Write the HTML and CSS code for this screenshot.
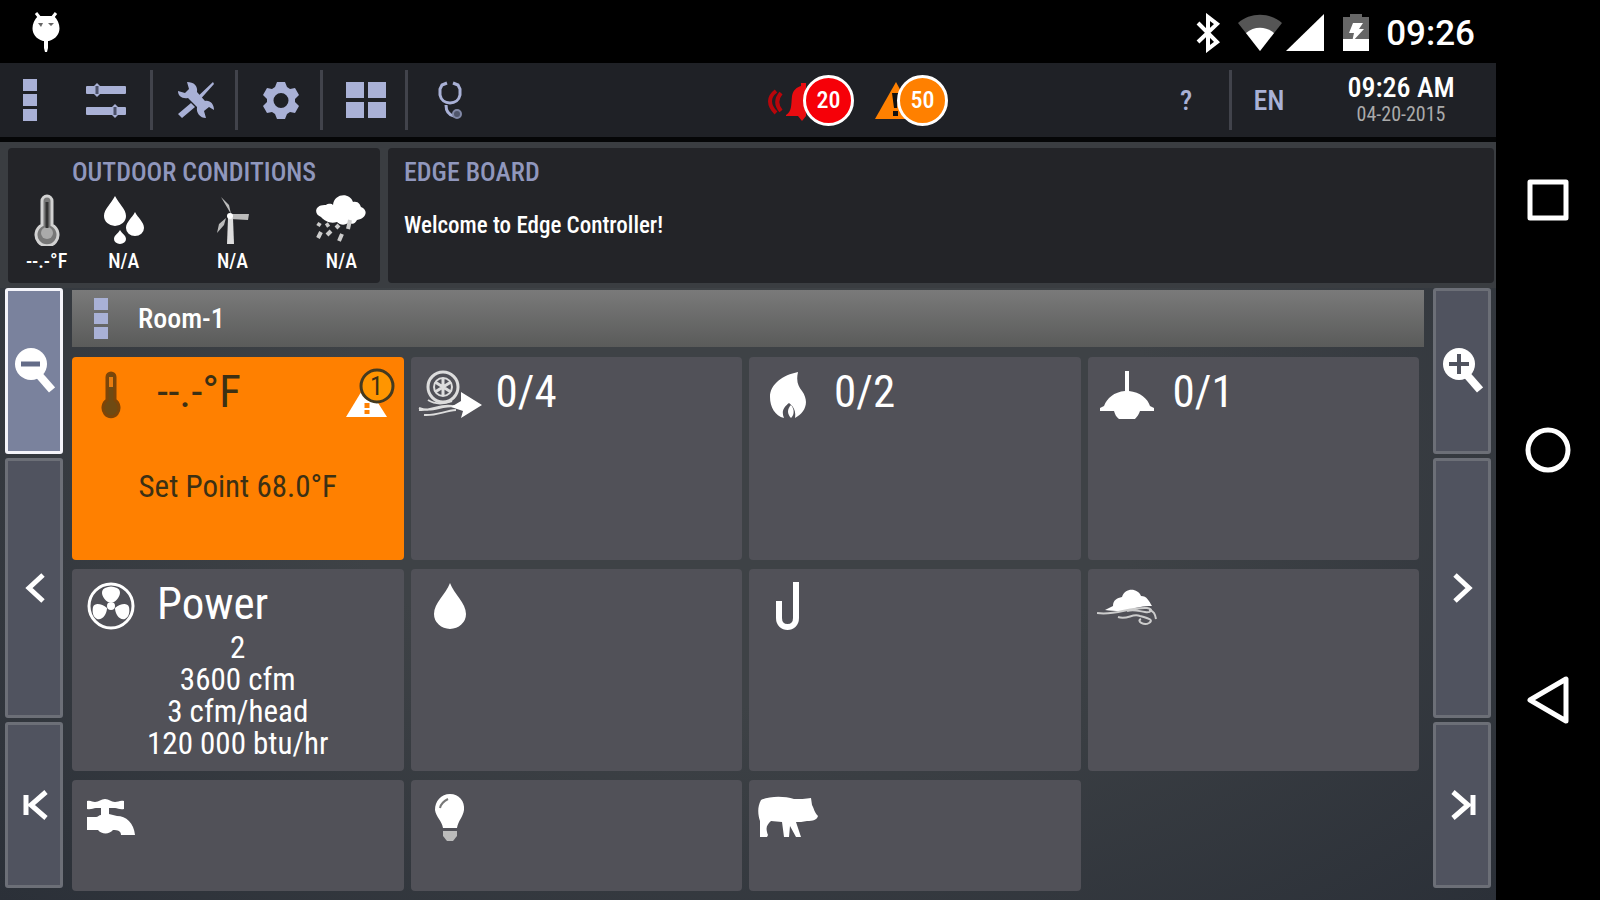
FILE: index.html
```html
<!DOCTYPE html>
<html lang="en">
<head>
    <meta charset="UTF-8">
    <meta name="viewport" content="width=device-width, initial-scale=1.0">
    <title>Edge Controller</title>
    <link rel="stylesheet" href="styles.css">
</head>
<body>

    <div class="device">
        <!-- Android status bar -->
        <div class="status-bar">
            <svg class="droid" width="28" height="42" viewBox="0 0 28 42">
                <path d="M4 1l4 5M24 1l-4 5" stroke="#fff" stroke-width="3"/>
                <path d="M6 4h16c8 8 8 21-5 25h-1v7l-1 4h-2l-1-4v-7h-1C-2 25-2 12 6 4z" fill="#fff"/>
                <path d="M6 11h5l-2 4zM22 11h-6l3 3z" fill="#666"/>
            </svg>
            <div class="status-icons">
                <svg width="26" height="40" viewBox="0 0 26 40">
                    <path d="M3 10l19 19-9 7V4l9 7L3 29" fill="none" stroke="#fff" stroke-width="4"/>
                </svg>
                <svg class="wifi" width="44" height="38" viewBox="0 0 44 38">
                    <path d="M0 9C12-2 32-2 44 9L22 37z" fill="#555"/>
                    <path d="M8 19c8-7 20-7 28 0L22 37z" fill="#fff"/>
                </svg>
                <svg width="38" height="38" viewBox="0 0 38 38"><path d="M38 0v37H0z" fill="#fff"/></svg>
                <svg class="battery" width="26" height="38" viewBox="0 0 26 38">
                    <path d="M7 0h12v3h7v34H0V3h7z" fill="#666"/>
                    <path d="M0 25h26v12H0z" fill="#fff"/>
                    <path d="M10 9h10l-4 6h5L9 28l2-9H6z" fill="#fff"/>
                </svg>
                <span class="status-time">09:26</span>
            </div>
        </div>

        <!-- Toolbar -->
        <div class="toolbar">
            <div class="tools">
                <button class="tool menu" aria-label="Menu">
                    <svg width="14" height="44" viewBox="0 0 14 44"><path d="M0 1h14v12H0zM0 16h14v12H0zM0 31h14v12H0z"/></svg>
                </button>
                <button class="tool first" aria-label="Parameters">
                    <svg width="40" height="36" viewBox="0 0 40 36">
                        <path d="M1 5h38v6H1zM1 26h38v6H1z" stroke="#a9b1d6" stroke-width="2" stroke-linejoin="round"/>
                        <path d="M11 1l4 4v6l-4 4-4-4V5zM29 22l4 4v6l-4 4-4-4v-6z"/>
                        <path d="M11 4v8M29 25v8" stroke="#4b5068" stroke-width="3"/>
                    </svg>
                </button>
                <button class="tool" aria-label="Tools">
                    <svg width="38" height="38" viewBox="0 0 38 38">
                        <path d="M1 10l7 2 4-4-2-7c7 0 11 4 10 10l8 9c5-1 9 3 9 9l-5-3-5 4 2 7c-6 0-10-5-9-11l-9-9C5 18 1 15 1 10z"/>
                        <path d="M36 1l1 2-17 19-3-3zM14 22l4 4L5 37l-4-4z"/>
                    </svg>
                </button>
                <button class="tool" aria-label="Settings">
                    <svg width="36" height="38" viewBox="0 0 36 38">
                        <path fill-rule="evenodd" d="M14 1h8l2 5 3 2 5-1 4 7-4 4v3l4 4-4 7-5-1-3 2-2 5h-8l-2-5-3-2-5 1-4-7 4-4v-3l-4-4 4-7 5 1 3-2zM18 12a7 7 0 1 0 0 15a7 7 0 1 0 0-15z"/>
                    </svg>
                </button>
                <button class="tool" aria-label="Overview">
                    <svg width="40" height="38" viewBox="0 0 40 38"><path d="M0 1h18v16H0zM22 1h18v16H22zM0 21h18v16H0zM22 21h18v16H22z"/></svg>
                </button>
                <button class="tool last" aria-label="Diagnostics">
                    <svg width="26" height="38" viewBox="0 0 26 38">
                        <path d="M9 2L4 4 2 8v6c1 5 5 8 10 8s9-3 10-8V8l-2-4-5-2M8 24c0 6 3 10 8 11" fill="none" stroke="#a9b1d6" stroke-width="3"/>
                        <circle cx="19" cy="33" r="4" fill="#50566b" stroke="#8188a6" stroke-width="2"/>
                    </svg>
                </button>
            </div>

            <div class="alerts">
                <button class="alert" aria-label="Alarms">
                    <svg width="86" height="54" viewBox="0 0 86 54">
                        <path d="M8 18c-8 6-8 14 0 22M13 20c-5 6-5 12 0 18" fill="none" stroke="#b8060b" stroke-width="4"/>
                        <path d="M18 42c6-4 5-9 6-19 1-6 5-9 9-10v-3h5v33l-4 5-4-5H18z" fill="#e80c10"/>
                    </svg>
                    <span class="badge red">20</span>
                </button>
                <button class="alert" aria-label="Warnings">
                    <svg width="74" height="54" viewBox="0 0 74 54">
                        <path d="M22 9l20 37H1z" fill="#ff8000"/>
                        <path d="M18 20h7l-2 15h-3zM19 38h5v5h-5z" fill="#111"/>
                    </svg>
                    <span class="badge orange">50</span>
                </button>
            </div>

            <div class="tools-right">
                <button class="tool help">?</button>
                <button class="tool lang">EN</button>
                <div class="clock">
                    <div class="clock-time">09:26 AM</div>
                    <div class="clock-date">04-20-2015</div>
                </div>
            </div>
        </div>

        <!-- Weather and message board -->
        <div class="boards">
            <div class="panel outdoor">
                <h2>OUTDOOR CONDITIONS</h2>
                <div class="conditions">
                    <div class="condition">
                        <svg width="26" height="52" viewBox="0 0 26 52">
                            <path d="M8 31V7a5 5 0 0 1 10 0v24a11 11 0 1 1-10 0z" fill="#777" stroke="#d2d2d2" stroke-width="3"/>
                            <circle cx="13" cy="39" r="6" fill="#aaa"/>
                            <path d="M13 8v26" stroke="#333" stroke-width="3"/>
                        </svg>
                        <span>--.-°F</span>
                    </div>
                    <div class="condition">
                        <svg width="42" height="52" viewBox="0 0 42 52">
                            <path d="M12 2c4 8 11 13 11 20a11 10 0 0 1-22 0C1 15 8 10 12 2zM32 18c3 6 9 10 9 16a9 8 0 0 1-18 0c0-6 6-10 9-16zM17 36c2 4 6 5 6 9a6 5 0 0 1-12 0c0-4 4-5 6-9z" fill="#fff"/>
                        </svg>
                        <span>N/A</span>
                    </div>
                    <div class="condition wide">
                        <svg width="36" height="52" viewBox="0 0 36 52">
                            <path d="M6 3l8 8 2 9zM15 20l19 0-1 6-18-1zM11 24l-2 7-7 8 2-9z" fill="#bbb"/>
                            <path d="M13 24h5l1 26h-7z" fill="#ddd"/>
                            <circle cx="15" cy="22" r="3" fill="#fff"/>
                        </svg>
                        <span>N/A</span>
                    </div>
                    <div class="condition">
                        <svg width="52" height="52" viewBox="0 0 52 52">
                            <path d="M6 23c-8-3-6-13 5-12 3-2 6-1 7 0 1-12 17-13 20-3 6-1 7 3 8 5 8 3 5 12-4 13-2 4-5 5-8 2-4 4-9 3-12 0-7 2-12-1-16-5z" fill="#fff"/>
                            <path d="M5 29l-2 3M14 30l-3 2M24 31l-3 3M35 26l-2 9M6 38l-3 6M16 37l-4 4M27 40l-3 7" stroke="#ccc" stroke-width="4"/>
                        </svg>
                        <span>N/A</span>
                    </div>
                </div>
            </div>
            <div class="panel board">
                <h2>EDGE BOARD</h2>
                <p>Welcome to Edge Controller!</p>
            </div>
        </div>

        <!-- Room view -->
        <div class="main">
            <div class="side">
                <button class="side-btn active" aria-label="Zoom out">
                    <svg width="40" height="48" viewBox="0 0 40 48">
                        <circle cx="16" cy="17" r="16" fill="#fff"/>
                        <path d="M24 28l13 15" stroke="#fff" stroke-width="8"/>
                        <path d="M6 17h19" stroke="#646c88" stroke-width="5"/>
                    </svg>
                </button>
                <button class="side-btn tall" aria-label="Previous">
                    <svg width="24" height="32" viewBox="0 0 24 32"><path d="M20 3L6 16l14 13"/></svg>
                </button>
                <button class="side-btn" aria-label="First">
                    <svg width="28" height="32" viewBox="0 0 28 32"><path d="M5 6v20M25 3L10 16l15 13"/></svg>
                </button>
            </div>

            <div class="room">
                <div class="room-bar">
                    <svg width="14" height="42" viewBox="0 0 14 42"><path d="M0 0h14v12H0zM0 15h14v11H0zM0 29h14v12H0z" fill="#a9b1d6"/></svg>
                    <h1>Room-1</h1>
                </div>

                <div class="tiles">
                    <button class="tile warning">
                        <span class="tile-head">
                            <span class="tile-icon">
                                <svg width="20" height="50" viewBox="0 0 20 50">
                                    <path d="M6 30V7a4 4 0 0 1 8 0v23a8 9 0 1 1-8 0z" fill="#6f4a12" stroke="#7d4508" stroke-width="3"/>
                                    <path d="M10 7v10" stroke="#e87d10" stroke-width="4"/>
                                </svg>
                            </span>
                            <span class="tile-value">--.-°F</span>
                            <span class="tile-alert">
                                <svg width="50" height="54" viewBox="0 0 50 54">
                                    <path d="M20 16L41 49H0z" fill="#fff"/>
                                    <path d="M21 35v5M21 42v4" stroke="#ff8000" stroke-width="5"/>
                                    <circle cx="31" cy="18" r="16" fill="#ff9500" stroke="#443a20" stroke-width="3"/>
                                </svg>
                                <span class="tile-count">1</span>
                            </span>
                        </span>
                        <span class="setpoint">Set Point 68.0°F</span>
                    </button>
                    <button class="tile">
                        <span class="tile-head">
                            <span class="tile-icon">
                                <svg width="64" height="50" viewBox="0 0 64 50">
                                    <g fill="none" stroke="#ddd">
                                        <circle cx="25" cy="17" r="15" stroke-width="3"/>
                                        <circle cx="25" cy="17" r="9" stroke-width="2"/>
                                        <path d="M25 8v18M17 12l16 10M17 22l16-10" stroke-width="3"/>
                                        <path d="M10 30c8 5 16 4 24 1M1 38c12 5 22-3 37-2M6 45c12 1 20-4 32-5M1 40c14 1 20-6 33-4" stroke-width="2"/>
                                    </g>
                                    <path d="M43 22l21 13-21 13 2-7-12-4 10-6z" fill="#fff"/>
                                </svg>
                            </span>
                            <span class="tile-value">0/4</span>
                        </span>
                    </button>
                    <button class="tile">
                        <span class="tile-head">
                            <span class="tile-icon">
                                <svg width="38" height="50" viewBox="0 0 38 50">
                                    <path d="M29 2c-2 9 0 14 4 19 8 11 3 22-7 27 1-7-1-11-6-15-5 4-8 8-5 15C6 46 1 37 1 27 1 14 14 5 29 2z" fill="#fff"/>
                                    <path d="M22 35c4 5 3 10 0 13-4-4-4-9 0-13z" fill="#fff"/>
                                </svg>
                            </span>
                            <span class="tile-value">0/2</span>
                        </span>
                    </button>
                    <button class="tile">
                        <span class="tile-head">
                            <span class="tile-icon">
                                <svg width="54" height="50" viewBox="0 0 54 50">
                                    <path d="M25 1h4v20c11 1 19 8 21 15l4 2v3H40c-1 3-3 6-5 8H19c-3-2-4-5-5-8H0v-3l4-2c3-8 10-14 21-15z" fill="#fff"/>
                                </svg>
                            </span>
                            <span class="tile-value">0/1</span>
                        </span>
                    </button>
                    <button class="tile">
                        <span class="tile-head">
                            <span class="tile-icon">
                                <svg width="48" height="50" viewBox="0 0 48 50">
                                    <circle cx="24" cy="25" r="22" fill="none" stroke="#fff" stroke-width="3"/>
                                    <path d="M21 21C16 18 12 10 18 7q6-3 12 0c6 3 2 11-3 14zM20 27c0 6-5 13-10 11-4-2-5-7-4-12 2-5 9-3 14 1zM28 27c5-4 12-6 14-1 1 5 0 10-4 12-5 2-10-5-10-11z" fill="#fff"/>
                                    <circle cx="24" cy="25" r="4" fill="#fff"/>
                                </svg>
                            </span>
                            <span class="tile-value">Power</span>
                        </span>
                        <span class="tile-lines">2<br>3600 cfm<br>3 cfm/head<br>120 000 btu/hr</span>
                    </button>
                    <button class="tile" aria-label="Water">
                        <span class="tile-head">
                            <span class="tile-icon">
                                <svg width="34" height="50" viewBox="0 0 34 50"><path d="M17 2c4 11 16 20 16 31a16 15 0 0 1-32 0C1 22 13 13 17 2z" fill="#fff"/></svg>
                            </span>
                        </span>
                    </button>
                    <button class="tile" aria-label="Feed">
                        <span class="tile-head">
                            <span class="tile-icon">
                                <svg width="26" height="50" viewBox="0 0 26 50"><path d="M4 20v17c0 12 17 12 17 0V1" fill="none" stroke="#fff" stroke-width="6"/></svg>
                            </span>
                        </span>
                    </button>
                    <button class="tile" aria-label="Air quality">
                        <span class="tile-head">
                            <span class="tile-icon">
                                <svg width="60" height="50" viewBox="0 0 60 50">
                                    <path d="M8 29l8-4c0-6 4-8 9-9 3-10 16-9 19-1 6 0 8 5 11 10-9 0-15 1-22 4-8 2-16 1-25 0z" fill="#fff"/>
                                    <path d="M0 32c18 3 32-6 50-5 7 1 4 5-2 4-7-1-11-3-18-1M21 36c10 3 14-4 22-1 11 3 13 4 9 7-5 3-13-2-8-4M52 29c5 1 6 4 7 9" fill="none" stroke="#ccc" stroke-width="2"/>
                                </svg>
                            </span>
                        </span>
                    </button>
                    <button class="tile" aria-label="Water meter">
                        <span class="tile-head">
                            <span class="tile-icon">
                                <svg width="48" height="50" viewBox="0 0 48 50">
                                    <path d="M0 8c4-1 5 1 8 1 4 0 6-3 10-3s6 3 10 3c3 0 5-2 9-1v8c-4 1-6-1-9-1h-6v6l8 2c9 0 17 7 18 19H34c0-4-3-5-8-5-4 5-12 4-15 0H0V24h9c2 0 3-2 5-2v-7H9c-3 0-5 2-9 1z" fill="#fff"/>
                                </svg>
                            </span>
                        </span>
                    </button>
                    <button class="tile" aria-label="Light">
                        <span class="tile-head">
                            <span class="tile-icon">
                                <svg width="32" height="50" viewBox="0 0 32 50">
                                    <path d="M16 1c9 0 15 7 14 16-1 7-6 11-7 18H9C8 28 2 24 1 17 1 8 7 1 16 1z" fill="#fff"/>
                                    <path d="M6 15c1-5 4-7 8-9" fill="none" stroke="#777" stroke-width="2"/>
                                    <path d="M9 38h14v5l-4 5h-6l-4-5z" fill="#bbb"/>
                                </svg>
                            </span>
                        </span>
                    </button>
                    <button class="tile" aria-label="Animals">
                        <span class="tile-head">
                            <span class="tile-icon">
                                <svg width="60" height="50" viewBox="0 0 60 50">
                                    <path d="M3 7c9-4 23-4 33-1 5 0 12 0 17-1l1 7c2 3 2 7 6 11-1 4-5 5-11 5-4 1-8 1-11 1l5 15h-5l-6-11-1 11h-5l-2-15-11-1c-4 4-6 6-3 14l-1 2H2V28C0 22-1 14 3 7z" fill="#fff"/>
                                </svg>
                            </span>
                        </span>
                    </button>
                </div>
            </div>

            <div class="side">
                <button class="side-btn" aria-label="Zoom in">
                    <svg width="40" height="48" viewBox="0 0 40 48">
                        <circle cx="16" cy="17" r="16" fill="#fff"/>
                        <path d="M24 28l13 15" stroke="#fff" stroke-width="8"/>
                        <path d="M6 17h20M16 7v20" stroke="#50535f" stroke-width="4"/>
                    </svg>
                </button>
                <button class="side-btn tall" aria-label="Next">
                    <svg width="24" height="32" viewBox="0 0 24 32"><path d="M4 3l14 13L4 29"/></svg>
                </button>
                <button class="side-btn" aria-label="Last">
                    <svg width="28" height="32" viewBox="0 0 28 32"><path d="M24 6v20M4 3l15 13L4 29"/></svg>
                </button>
            </div>
        </div>
    </div>

    <!-- Android navigation -->
    <nav class="android-nav">
        <button aria-label="Recent apps">
            <svg width="44" height="44" viewBox="0 0 44 44"><path d="M4 4h36v36H4z"/></svg>
        </button>
        <button aria-label="Home">
            <svg width="46" height="46" viewBox="0 0 46 46"><circle cx="23" cy="23" r="20"/></svg>
        </button>
        <button aria-label="Back">
            <svg width="44" height="50" viewBox="0 0 44 50"><path d="M40 4v42L4 25z"/></svg>
        </button>
    </nav>

</body>
</html>
```
FILE: styles.css
```css
* {
    box-sizing: border-box;
}
body {
    margin: 0;
    display: flex;
    min-height: 100vh;
    background: black;
    color: white;
    font-family: "Roboto Condensed", "Liberation Sans Narrow", Roboto, sans-serif;
}
button {
    margin: 0;
    padding: 0;
    border: none;
    background: none;
    color: inherit;
    font: inherit;
    cursor: pointer;
}
svg {
    display: block;
    flex: none;
}
h1, h2, p {
    margin: 0;
    font-weight: normal;
}
.device {
    flex: 1;
    display: flex;
    flex-direction: column;
    background: radial-gradient(ellipse at center, #3e4246 40%, #2b3038 100%);
}

/* status bar */
.status-bar {
    display: flex;
    justify-content: space-between;
    align-items: center;
    height: 63px;
    padding: 3px 21px 0 32px;
    background: black;
}
.status-icons {
    display: flex;
    align-items: center;
}
.wifi {
    margin: 0 4px 0 17px;
}
.battery {
    margin: 0 17px 0 19px;
}
.status-time {
    font: 500 35px Roboto, sans-serif;
}

/* toolbar */
.toolbar {
    display: flex;
    height: 79px;
    background: #1f2126;
    border-bottom: 5px solid #050607;
}
.tools, .tools-right {
    display: flex;
    align-items: center;
}
.tool {
    display: flex;
    align-items: center;
    justify-content: center;
    width: 85px;
    height: 60px;
    padding-left: 3px;
    border-right: 3px solid #41434b;
    color: #a9b1d6;
    fill: #a9b1d6;
    font-size: 28px;
    font-weight: 500;
}
.menu {
    width: 59px;
    padding: 0;
    border: none;
}
.first {
    width: 94px;
}
.last, .lang {
    padding: 0;
    border: none;
}
.help {
    width: 92px;
}
.lang {
    width: 74px;
}
.alerts {
    display: flex;
    align-items: center;
    gap: 20px;
    margin: 0 192px 0 auto;
}
.alert {
    display: flex;
    align-items: center;
}
.badge {
    display: flex;
    align-items: center;
    justify-content: center;
    width: 51px;
    height: 51px;
    margin-left: -51px;
    border: 3px solid white;
    border-radius: 50%;
    font-size: 24px;
    font-weight: 500;
    line-height: 26px;
}
.red {
    background: #f60008;
}
.orange {
    background: #ff8000;
}
.clock {
    width: 190px;
    text-align: center;
}
.clock-time {
    font-size: 28px;
    font-weight: 500;
    line-height: 28px;
}
.clock-date {
    font-size: 20px;
    line-height: 24px;
    color: #aaa;
}

/* boards */
.boards {
    display: flex;
    gap: 8px;
    padding: 6px 2px 5px 8px;
    background: #3a3d41;
}
.panel {
    height: 135px;
    background: #232428;
    border-radius: 4px;
    padding-top: 9px;
}
.panel h2 {
    font-size: 26px;
    font-weight: 500;
    line-height: 30px;
    color: #9097bd;
}
.outdoor {
    width: 372px;
    text-align: center;
}
.board {
    flex: 1;
    padding-left: 16px;
}
.board p {
    margin-top: 24px;
    font-size: 23px;
    font-weight: 500;
    line-height: 30px;
}
.conditions {
    display: flex;
    padding-top: 7px;
}
.condition {
    display: flex;
    flex-direction: column;
    align-items: center;
    flex: 77;
    font-size: 20px;
    font-weight: 500;
    line-height: 30px;
}
.wide {
    flex: 140;
}

/* room */
.main {
    flex: 1;
    display: flex;
    gap: 9px;
    padding: 0 5px 9px;
}
.side {
    display: flex;
    flex-direction: column;
    gap: 4px;
    width: 58px;
    padding-bottom: 3px;
}
.side-btn {
    flex: 165;
    display: flex;
    align-items: center;
    justify-content: center;
    padding-left: 2px;
    border: 3px solid #6c6f77;
    border-radius: 3px;
    background: #50535f;
}
.side-btn path {
    fill: none;
}
.tall path, .side-btn:last-child path {
    stroke: white;
    stroke-width: 5;
}
.tall {
    flex: 263;
}
.active {
    background: #7a829d;
    border-color: #f4f4fa;
}
.room {
    flex: 1;
    display: flex;
    flex-direction: column;
    padding-top: 2px;
}
.room-bar {
    display: flex;
    align-items: center;
    gap: 30px;
    height: 57px;
    padding-left: 22px;
    background: linear-gradient(#7a7a7a, #5a5b5a);
}
.room-bar h1 {
    font-size: 28px;
    font-weight: 500;
    line-height: 36px;
}
.tiles {
    flex: 1;
    display: grid;
    grid-template-columns: repeat(4, 1fr);
    grid-template-rows: 203fr 203fr 111fr;
    gap: 9px 7px;
    padding: 10px 5px 0 0;
}
.tile {
    display: flex;
    flex-direction: column;
    align-items: stretch;
    justify-content: flex-start;
    border-radius: 4px;
    background: #515158;
}
.tile-head {
    display: flex;
    align-items: center;
    gap: 16px;
    height: 63px;
    padding: 12px 8px 0 9px;
}
.tile-icon {
    display: flex;
    justify-content: center;
    width: 60px;
}
.tile-value {
    font-size: 45px;
    line-height: 46px;
    margin-bottom: 5px;
}
.warning {
    background: #ff8000;
    color: #3c3014;
}
.tile-alert {
    position: relative;
    margin-left: auto;
}
.tile-count {
    position: absolute;
    left: 15px;
    top: 3px;
    width: 32px;
    font-size: 26px;
    line-height: 30px;
    text-align: center;
}
.setpoint {
    margin-top: 47px;
    font-size: 31px;
    line-height: 40px;
}
.tile-lines {
    font-size: 31px;
    line-height: 32px;
}

/* navigation */
.android-nav {
    display: flex;
    flex-direction: column;
    width: 104px;
    padding: 75px 0;
}
.android-nav button {
    flex: 1;
    display: flex;
    align-items: center;
    justify-content: center;
}
.android-nav svg {
    fill: none;
    stroke: white;
    stroke-width: 5;
    stroke-linejoin: round;
}
```
